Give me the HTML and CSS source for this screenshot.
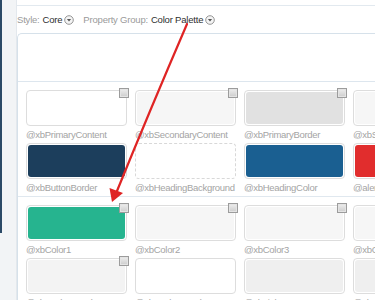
FILE: index.html
```html
<!DOCTYPE html>
<html>
<head>
<meta charset="utf-8">
<link rel="stylesheet" href="styles.css">
</head>
<body>
<div class="page">
  <div class="rail"><div class="rail-edge"></div></div>
  <div class="main">
    <div class="topline"></div>
    <div class="filters">
      <span class="filter"><span class="flabel">Style:</span><span class="fvalue">Core</span><span class="dd"><svg viewBox="0 0 10 10" width="10" height="10"><circle cx="5" cy="5" r="4.3" fill="#f4f4f4" stroke="#8a8a8a" stroke-width="0.9"/><path d="M2.9 4 L7.1 4 L5 6.4 Z" fill="#555"/></svg></span></span>
      <span class="filter"><span class="flabel">Property Group:</span><span class="fvalue">Color Palette</span><span class="dd"><svg viewBox="0 0 10 10" width="10" height="10"><circle cx="5" cy="5" r="4.3" fill="#f4f4f4" stroke="#8a8a8a" stroke-width="0.9"/><path d="M2.9 4 L7.1 4 L5 6.4 Z" fill="#555"/></svg></span></span>
    </div>
    <div class="panel">
      <div class="panel-head"></div>
      <div class="group">
        <div class="grid">
          <div class="cell"><div class="box"><div class="swatch white"></div></div><span class="check"></span><div class="label">@xbPrimaryContent</div></div>
          <div class="cell"><div class="box"><div class="swatch light"></div></div><span class="check"></span><div class="label">@xbSecondaryContent</div></div>
          <div class="cell"><div class="box"><div class="swatch gray"></div></div><span class="check"></span><div class="label">@xbPrimaryBorder</div></div>
          <div class="cell"><div class="box"><div class="swatch light"></div></div><span class="check"></span><div class="label">@xbSecondaryBorder</div></div>
          <div class="cell"><div class="box"><div class="swatch navy"></div></div><div class="label">@xbButtonBorder</div></div>
          <div class="cell"><div class="box dashed"><div class="swatch white"></div></div><div class="label">@xbHeadingBackground</div></div>
          <div class="cell"><div class="box"><div class="swatch blue"></div></div><div class="label">@xbHeadingColor</div></div>
          <div class="cell"><div class="box"><div class="swatch red"></div></div><div class="label">@alertColor</div></div>
        </div>
      </div>
      <div class="group">
        <div class="grid">
          <div class="cell"><div class="box"><div class="swatch teal"></div></div><span class="check"></span><div class="label">@xbColor1</div></div>
          <div class="cell"><div class="box"><div class="swatch light"></div></div><span class="check"></span><div class="label">@xbColor2</div></div>
          <div class="cell"><div class="box"><div class="swatch light"></div></div><span class="check"></span><div class="label">@xbColor3</div></div>
          <div class="cell"><div class="box"><div class="swatch light"></div></div><span class="check"></span><div class="label">@xbColor4</div></div>
          <div class="cell"><div class="box"><div class="swatch pale"></div></div><span class="check"></span><div class="label">@xbBackground1</div></div>
          <div class="cell"><div class="box"><div class="swatch white"></div></div><div class="label">@xbBackground2</div></div>
          <div class="cell"><div class="box"><div class="swatch pale2"></div></div><div class="label">@xbLink</div></div>
          <div class="cell"><div class="box"><div class="swatch pale2"></div></div><div class="label">@xbLinkHover</div></div>
        </div>
      </div>
    </div>
  </div>
  <svg class="arrow" width="375" height="300" viewBox="0 0 375 300">
    <path d="M187 24 Q150 110 117 191" fill="none" stroke="#df2424" stroke-width="2.2" stroke-linecap="round"/>
    <polygon points="112,202 109.5,188 123,193" fill="#df2424"/>
  </svg>
</div>
</body>
</html>
```

FILE: styles.css
```css
html, body {
  margin: 0;
  padding: 0;
}
body {
  width: 375px;
  height: 300px;
  overflow: hidden;
  background: #ffffff;
  font-family: "Liberation Sans", Arial, sans-serif;
}
.page {
  position: relative;
  display: flex;
  width: 375px;
  height: 300px;
  overflow: hidden;
}
.rail {
  flex: 0 0 16px;
  background: #f2f4f6;
  border-right: 1px solid #e3e8ed;
}
.rail-edge {
  width: 2px;
  height: 233px;
  background: #2b4a67;
}
.main {
  flex: 1 1 auto;
  min-width: 0;
}
.topline {
  height: 5px;
  border-bottom: 1px solid #e2e9ef;
}
.filters {
  height: 27px;
  display: flex;
  align-items: center;
  gap: 9px;
  font-size: 9.5px;
  letter-spacing: -0.2px;
}
.filter {
  display: flex;
  align-items: center;
  white-space: nowrap;
}
.flabel {
  color: #9a9a9a;
  margin-right: 3px;
}
.fvalue {
  color: #2e2e2e;
}
.dd {
  display: flex;
  margin-left: 2px;
}
.panel {
  width: 520px;
  border: 1px solid #d6e1ea;
  border-right: none;
  border-bottom: none;
  border-top-left-radius: 5px;
}
.panel-head {
  height: 47px;
  border-bottom: 1px solid #dde6ee;
}
.group {
  padding: 8px 0 0 8px;
  border-bottom: 1px solid #e0e8ef;
}
.grid {
  display: grid;
  grid-template-columns: repeat(4, 101px);
  column-gap: 8px;
}
.cell {
  position: relative;
  height: 53px;
}
.box {
  height: 36px;
  box-sizing: border-box;
  border: 1px solid #dddddd;
  border-radius: 4px;
  padding: 1px;
  background: #ffffff;
}
.box.dashed {
  border: 1px dashed #d8d8d8;
}
.swatch {
  height: 100%;
  border-radius: 3px;
}
.white { background: #ffffff; }
.light { background: #f6f6f6; }
.gray { background: #e1e1e1; }
.navy { background: #1c3e5c; }
.blue { background: #1a5f91; }
.red { background: #e12d2d; }
.teal { background: #26b48f; }
.pale { background: #f3f3f3; }
.pale2 { background: #efefef; }
.check {
  position: absolute;
  top: -2px;
  right: -2px;
  width: 10px;
  height: 10px;
  box-sizing: border-box;
  border: 1px solid #9c9c9c;
  background: linear-gradient(#eeeeee, #cccccc);
  box-shadow: inset 0 0 0 1px #e4e4e4;
}
.label {
  font-size: 9.5px;
  letter-spacing: -0.3px;
  line-height: 17px;
  color: #a4a4a4;
  white-space: nowrap;
}
.arrow {
  position: absolute;
  top: 0;
  left: 0;
  pointer-events: none;
}
```
